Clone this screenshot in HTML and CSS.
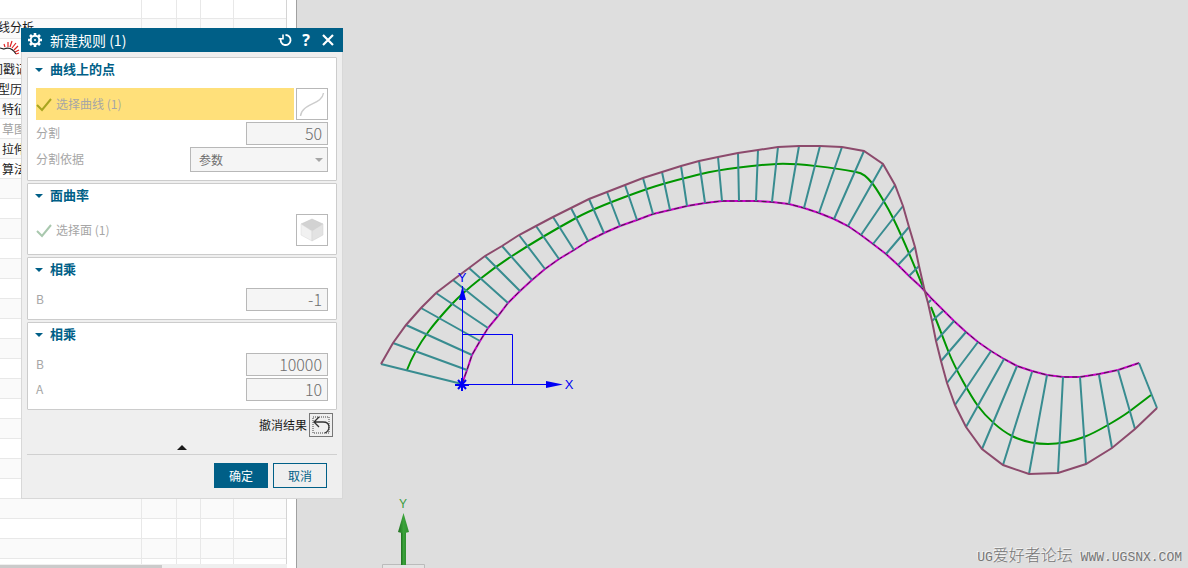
FILE: index.html
```
<!DOCTYPE html>
<html lang="zh-CN">
<head>
    <meta charset="UTF-8">
    <meta name="viewport" content="width=device-width, initial-scale=1.0">
    <title>新建规则</title>
    <link rel="stylesheet" href="styles.css">
</head>
<body>
    <div class="workspace">
        <aside class="navigator">
            <div class="tree">
                <div class="tree-columns"><i></i><i></i><i></i><i></i><i></i></div>
                <ul class="tree-rows">
                    <li></li>
                    <li class="scrolled">线分析</li>
                    <li>
                        <svg class="comb-icon" width="20" height="16" viewBox="0 0 20 16">
                            <path d="M0 8L4 9Q11 6 16 14" fill="none" stroke="#222" stroke-width="1.2"/>
                            <path d="M5 7L4 4M8 7L8 2M10 7L12 1M12 8L16 3M14 10L18 6M15 12L19 10M16 14L19 13" stroke="#d22" stroke-width="1.2"/>
                        </svg>
                    </li>
                    <li class="scrolled-far">间戳记</li>
                    <li class="scrolled">型历史</li>
                    <li>特征组</li>
                    <li class="inactive">草图</li>
                    <li>拉伸</li>
                    <li>算法</li>
                </ul>
            </div>
            <div class="scrollbar"><div class="thumb"></div></div>
        </aside>

        <main class="viewport">
            <svg class="scene" viewBox="297 0 891 568" preserveAspectRatio="xMinYMin meet">
                <!-- base curve -->
                <path class="base" d="M462 384L467 370L472 355L480 341L488 328L498 316L508 303L520 291L532 280L545 269L559 259L574 250L588 241L604 233L620 226L637 220L653 214L670 210L687 206L705 203L722 201L739 201L756 201L772 202L789 204L804 208L819 213L834 219L848 226L861 235L873 244L886 254L898 265L909 276L921 287L931 298L943 310L954 321L966 332L978 342L991 351L1004 359L1017 366L1032 371L1047 375L1063 377L1080 377L1099 374L1118 370L1139 363"/>
                <path class="base-dash" d="M462 384L467 370L472 355L480 341L488 328L498 316L508 303L520 291L532 280L545 269L559 259L574 250L588 241L604 233L620 226L637 220L653 214L670 210L687 206L705 203L722 201L739 201L756 201L772 202L789 204L804 208L819 213L834 219L848 226L861 235L873 244L886 254L898 265L909 276L921 287L931 298L943 310L954 321L966 332L978 342L991 351L1004 359L1017 366L1032 371L1047 375L1063 377L1080 377L1099 374L1118 370L1139 363"/>
                <!-- law curve -->
                <path class="law" d="M407 370C418 341 438 319 452 304S492 269 512 256S556 229 576 218S627 196 647 189S681 179 701 174S757 165 777 164S836 168 856 172C863 173 867 177 872 183S888 208 893 218S910 255 923 287"/>
                <path class="law" d="M931 307C936 319 943 338 949 353S970 395 978 406S1000 430 1012 436S1036 444 1048 444S1073 441 1084 437S1119 419 1130 411L1151 395"/>
                <!-- comb teeth -->
                <path class="teeth" d="M381 364L462 384M393 343L467 370M406 325L472 355M421 308L480 341M436 293L488 328M453 280L498 316M469 268L508 303M485 256L520 291M502 246L532 280M519 235L545 269M536 226L559 259M553 217L574 250M571 208L588 241M589 199L604 233M607 192L620 226M625 185L637 220M643 178L653 214M662 172L670 210M681 166L687 206M699 161L705 203M718 157L722 201M738 153L739 201M758 150L756 201M778 147L772 202M799 146L789 204M820 146L804 208M842 147L819 213M864 151L834 219M883 164L848 226M895 185L861 235M903 206L873 244M909 227L886 254M915 247L898 265M919 266L909 276M923 285L921 287M928 303L931 300M932 321L943 311M936 341L954 321M941 361L966 332M947 383L978 342M955 405L991 351M966 427L1004 359M982 449L1017 366M1003 465L1032 372M1029 474L1047 375M1058 473L1063 377M1086 464L1080 377M1112 448L1099 375M1135 429L1118 370M1157 408L1139 363"/>
                <!-- comb envelope -->
                <path class="envelope" d="M381 364L393 343L406 325L421 308L436 293L453 280L469 268L485 256L502 246L519 235L536 226L553 217L571 208L589 199L607 192L625 185L643 178L662 172L681 166L699 161L718 157L738 153L758 150L778 147L799 146L820 146L842 147L864 151L883 164L895 185L903 206L909 227L915 247L919 266L925 292L928 303L932 321L936 341L941 361L947 383L955 405L966 427L982 449L1003 465L1029 474L1058 473L1086 464L1112 448L1135 429L1157 408"/>
                <!-- work coordinate system -->
                <g class="wcs">
                    <path d="M462.5 384.5V286M462.5 384.5H550M462.5 334.5H512.5V384.5"/>
                    <path class="origin" d="M462 378V391M455 385H469M458 380L466 389M466 380L458 389"/>
                    <path class="head" d="M462.5 286L466 300H459ZM563 384.5L546 388V381Z"/>
                    <text x="462" y="282">Y</text>
                    <text x="569" y="389">X</text>
                </g>
                <!-- view triad -->
                <defs>
                    <linearGradient id="shaft">
                        <stop offset="0" stop-color="#1f6f1f"/>
                        <stop offset="0.5" stop-color="#3aa33a"/>
                        <stop offset="1" stop-color="#2f8f2f"/>
                    </linearGradient>
                </defs>
                <path d="M382.5 568V564.5H424.5V568" fill="#e4e4e4" stroke="#bbb"/>
                <rect x="401" y="530" width="5" height="35" fill="url(#shaft)"/>
                <path d="M403.5 513L409 532Q403 534 398 532Z" fill="url(#shaft)"/>
                <text class="triad-label" x="403" y="508">Y</text>
            </svg>
            <div class="watermark">UG<span>爱好者论坛</span> WWW.UGSNX.COM</div>
        </main>

        <form class="dialog">
            <header class="dialog-header">
                <svg width="14" height="14" viewBox="0 0 14 14">
                    <path d="M7 0V14M0 7H14M2 2L12 12M12 2L2 12" stroke="#fff" stroke-width="2.6"/>
                    <circle cx="7" cy="7" r="4.3" fill="#005f87" stroke="#fff" stroke-width="2"/>
                    <circle cx="7" cy="7" r="1" fill="#fff"/>
                </svg>
                <h1>新建规则 (1)</h1>
                <button type="button" aria-label="重置">
                    <svg width="14" height="14" viewBox="0 0 14 14" fill="none" stroke="#fff" stroke-width="1.8">
                        <path d="M7.5 2A5 5 0 1 1 3 5"/>
                        <path d="M0.5 5.8H5V1.500" stroke-width="1.6"/>
                    </svg>
                </button>
                <button type="button" class="help" aria-label="帮助">?</button>
                <button type="button" aria-label="关闭">
                    <svg width="12" height="12" viewBox="0 0 12 12"><path d="M1 1L11 11M11 1L1 11" stroke="#fff" stroke-width="2.2"/></svg>
                </button>
            </header>

            <div class="groups">
                <section class="group">
                    <button type="button" class="group-title">曲线上的点</button>
                    <div class="select-row active">
                        <div class="picker">
                            <svg width="16" height="16" viewBox="0 0 16 16"><path d="M1 9L6 14L15 3" fill="none" stroke="#a9a520" stroke-width="2"/></svg>
                            <span>选择曲线 (1)</span>
                        </div>
                        <button type="button" class="icon-button" aria-label="曲线">
                            <svg width="30" height="30" viewBox="0 0 30 30"><path d="M3.5 27C5 14 25 16 26.5 4" fill="none" stroke="#ccc" stroke-width="1.4"/></svg>
                        </button>
                    </div>
                    <div class="field">
                        <label for="divisions">分割</label>
                        <input id="divisions" type="text" value="50">
                    </div>
                    <div class="field">
                        <label for="divide-by">分割依据</label>
                        <div class="select-wrap">
                            <select id="divide-by"><option>参数</option></select>
                        </div>
                    </div>
                </section>

                <section class="group">
                    <button type="button" class="group-title">面曲率</button>
                    <div class="select-row">
                        <div class="picker">
                            <svg width="16" height="16" viewBox="0 0 16 16"><path d="M1 9L6 14L15 3" fill="none" stroke="#a9c8ae" stroke-width="2"/></svg>
                            <span>选择面 (1)</span>
                        </div>
                        <button type="button" class="icon-button" aria-label="面">
                            <svg width="30" height="30" viewBox="0 0 30 30">
                                <path d="M15 4L26 9L15 16L4 9Z" fill="#d2d2d2" stroke="#c4c4c4" stroke-width="0.5"/>
                                <path d="M4 9L15 16V26L4 20Z" fill="#f1f1f1" stroke="#d8d8d8" stroke-width="0.5"/>
                                <path d="M26 9L15 16V26L26 20Z" fill="#e3e3e3" stroke="#d0d0d0" stroke-width="0.5"/>
                            </svg>
                        </button>
                    </div>
                </section>

                <section class="group">
                    <button type="button" class="group-title">相乘</button>
                    <div class="field">
                        <label for="factor-b1">B</label>
                        <input id="factor-b1" type="text" value="-1">
                    </div>
                </section>

                <section class="group">
                    <button type="button" class="group-title">相乘</button>
                    <div class="field">
                        <label for="factor-b2">B</label>
                        <input id="factor-b2" type="text" value="10000">
                    </div>
                    <div class="field">
                        <label for="factor-a">A</label>
                        <input id="factor-a" type="text" value="10">
                    </div>
                </section>
            </div>

            <div class="undo-row">
                <label for="undo">撤消结果</label>
                <button type="button" id="undo" class="undo">
                    <svg width="22" height="22" viewBox="0 0 22 22" fill="none">
                        <rect x="3" y="3" width="16" height="16" stroke="#999" stroke-width="2" stroke-dasharray="1 1"/>
                        <path d="M9 3L4 8L9 13M4 8H13Q19 8 19 13Q19 17 15 19" stroke="#333" stroke-width="1.3"/>
                    </svg>
                </button>
            </div>
            <button type="button" class="collapse" aria-label="收起"></button>
            <footer class="actions">
                <button type="submit" class="primary">确定</button>
                <button type="button">取消</button>
            </footer>
        </form>
    </div>
</body>
</html>
```

FILE: styles.css
```
* {
    box-sizing: border-box;
}

body {
    margin: 0;
    font-family: "Noto Sans CJK SC", "Noto Sans", sans-serif;
    font-size: 12px;
    color: #1a1a1a;
}

button {
    font-family: inherit;
    font-size: 12px;
    padding: 0;
    border: 0;
    background: none;
}

svg {
    display: block;
    flex: none;
}

.workspace {
    display: flex;
    height: 100vh;
    position: relative;
    overflow: hidden;
    background: #dedede;
}

/* Part navigator */
.navigator {
    width: 297px;
    flex: none;
    display: flex;
    flex-direction: column;
    background: #fff;
    border-right: 1px solid #a0a0a0;
    overflow: hidden;
}

.tree {
    flex: 1;
    width: 287px;
    position: relative;
    overflow: hidden;
    /* striped rows, 20px each */
    background: repeating-linear-gradient(#fff 0 18px, #e8e8e8 18px 19px, #fafafa 19px 38px, #e8e8e8 38px 39px, #fff 39px 40px);
}

.tree-columns {
    position: absolute;
    inset: 0;
    display: grid;
    grid-template-columns: 142px 35px 24px 33px 53px;
}

.tree-columns i {
    border-right: 1px solid #e8e8e8;
}

.tree-columns i:last-child {
    border-right-color: #d4d4d4;
}

.tree-rows {
    position: relative;
    list-style: none;
    margin: 0;
    padding: 0;
}

.tree-rows li {
    height: 20px;
    line-height: 18px;
    padding-left: 2px;
    white-space: nowrap;
}

.tree-rows li:first-child {
    height: 18px;
}

.tree-rows .scrolled {
    margin-left: -4px;
}

.tree-rows .scrolled-far {
    margin-left: -11px;
}

.tree-rows .inactive {
    color: #a0a0a0;
}

.comb-icon {
    margin: 2px 0 0 -2px;
}

.scrollbar {
    height: 4px;
    width: 287px;
    padding-top: 1px;
    background: #efefef;
}

.thumb {
    width: 162px;
    height: 3px;
    background: #cbcbcb;
}

/* Graphics window */
.viewport {
    flex: 1;
    min-width: 0;
    position: relative;
}

.scene {
    width: 100%;
    height: 100%;
    fill: none;
}

.base {
    stroke: #c800c8;
    stroke-width: 2;
}

.base-dash {
    stroke: #3c283c;
    stroke-width: 1;
    stroke-dasharray: 5 3;
}

.law {
    stroke: #009600;
    stroke-width: 2;
}

.teeth {
    stroke: #388c90;
    stroke-width: 2;
}

.envelope {
    stroke: #8c4a6c;
    stroke-width: 2;
}

.wcs {
    stroke: #0000f5;
    stroke-width: 1;
}

.origin {
    stroke-width: 2;
}

.head {
    fill: #0000f5;
    stroke: none;
}

.wcs text,
.triad-label {
    fill: #0000f5;
    stroke: none;
    font-family: "Liberation Sans", sans-serif;
    font-size: 13px;
    text-anchor: middle;
}

.triad-label {
    fill: #3c9c3c;
    font-size: 12px;
}

.watermark {
    position: absolute;
    right: 6px;
    bottom: 0;
    font-family: "Liberation Mono", "Noto Sans CJK SC", monospace;
    font-size: 13px;
    line-height: 20px;
    color: #777;
    text-shadow: -1px -1px 0 #f4f4f4;
}

.watermark span {
    font-size: 16px;
    font-weight: 300;
}

/* Dialog */
.dialog {
    position: absolute;
    left: 21px;
    top: 28px;
    width: 322px;
    background: #efefef;
    border: 1px solid #d8d8d8;
    border-top: 0;
}

.dialog-header {
    display: flex;
    align-items: center;
    gap: 8px;
    height: 24px;
    margin: 0 -1px;
    padding: 0 9px 0 7px;
    background: #005f87;
    color: #fff;
}

.dialog-header h1 {
    flex: 1;
    margin: 0;
    font-size: 14px;
    font-weight: 400;
    line-height: 24px;
}

.dialog-header .help {
    width: 12px;
    margin-right: 2px;
    color: #fff;
    font-family: "Open Sans", sans-serif;
    font-size: 16px;
    font-weight: 700;
    line-height: 24px;
}

.groups {
    display: flex;
    flex-direction: column;
    gap: 2px;
    padding: 5px 5px 0;
}

.group {
    display: flex;
    flex-direction: column;
    gap: 2px;
    padding: 0 8px 8px;
    background: #fff;
    border: 1px solid #ccc;
    border-radius: 1px;
}

.group-title {
    display: flex;
    align-items: center;
    gap: 7px;
    height: 24px;
    margin-bottom: 4px;
    padding-bottom: 3px;
    color: #005f87;
    font-size: 13px;
    font-weight: 700;
    line-height: 20px;
}

.group-title::before {
    content: "";
    margin: 2px 0 0 -1px;
    border: 4px solid transparent;
    border-top-color: #005f87;
    border-bottom: 0;
}

.select-row {
    display: flex;
    gap: 2px;
    color: #a6a6a6;
}

.picker {
    flex: 1;
    display: flex;
    align-items: center;
    gap: 4px;
}

.picker span {
    padding-bottom: 2px;
}

.active .picker {
    background: #ffe07a;
}

.icon-button {
    width: 32px;
    height: 32px;
    border: 1px solid #b8b8b8;
    background: #fff;
}

.field {
    display: flex;
    justify-content: space-between;
    align-items: center;
    color: #a6a6a6;
}

.field label,
.undo-row label {
    padding-bottom: 2px;
}

.field input,
.field select {
    font-family: inherit;
    border: 1px solid #b8b8b8;
    border-radius: 0;
    background: #f5f5f5;
    color: #6e6e6e;
}

.field input {
    width: 82px;
    height: 23px;
    padding: 0 5px 2px;
    font-size: 16px;
    font-weight: 300;
    text-align: right;
}

.select-wrap {
    position: relative;
}

.select-wrap::after {
    content: "";
    position: absolute;
    right: 5px;
    top: 11px;
    border: 4px solid transparent;
    border-top-color: #a6a6a6;
    border-bottom: 0;
}

.field select {
    display: block;
    width: 138px;
    height: 25px;
    padding: 0 8px;
    font-size: 12px;
    appearance: none;
}

.undo-row {
    display: flex;
    justify-content: flex-end;
    align-items: center;
    gap: 2px;
    padding: 3px 9px 0 0;
}

.undo {
    width: 24px;
    height: 24px;
    border: 1px solid #777;
}

.collapse {
    display: block;
    margin: 8px auto 4px;
    border: 5px solid transparent;
    border-bottom-color: #1a1a1a;
    border-top: 0;
}

.actions {
    display: flex;
    justify-content: flex-end;
    gap: 5px;
    margin: 0 5px;
    padding: 8px 10px 10px 0;
    border-top: 1px solid #d0d0d0;
}

.actions button {
    width: 54px;
    height: 25px;
    border: 1px solid #005f87;
    color: #005f87;
}

.actions .primary {
    background: #005f87;
    color: #fff;
}
```
